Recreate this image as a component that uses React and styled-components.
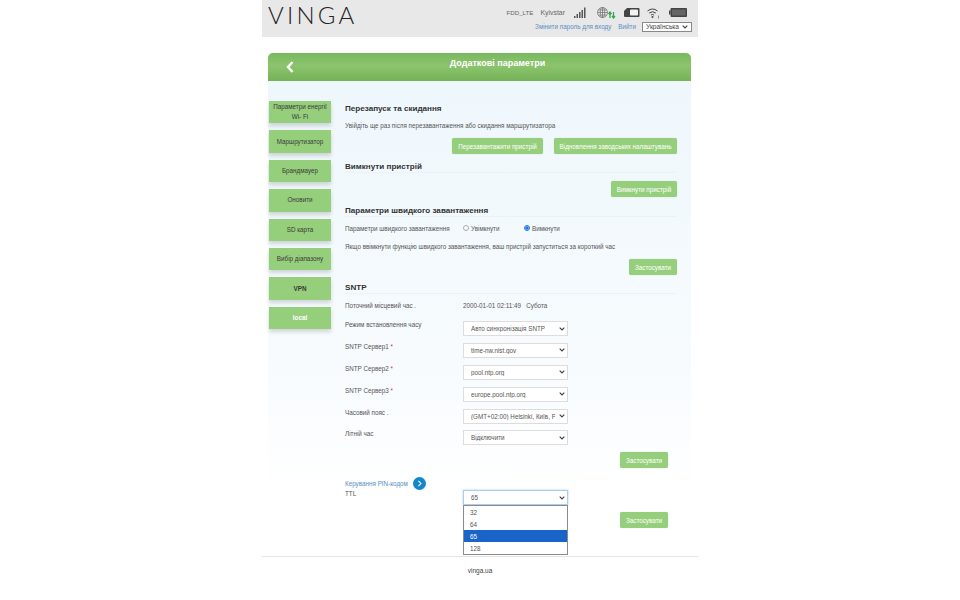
import { Fragment } from 'react';
import styled, { createGlobalStyle } from 'styled-components';

const GlobalStyle = createGlobalStyle`
  html, body {
    margin: 0;
    padding: 0;
    background: #fff;
  }
  body {
    font-family: "Liberation Sans", Arial, sans-serif;
    color: #333;
  }
`;

const chevron = `url("data:image/svg+xml,%3Csvg xmlns='http://www.w3.org/2000/svg' width='6' height='4'%3E%3Cpath d='M.7.7 3 3 5.3.7' fill='none' stroke='%23444' stroke-width='1.2'/%3E%3C/svg%3E")`;

const Page = styled.div`
  width: 436px;
  height: 600px;
  margin-left: 262px;
  overflow: hidden;
`;

const TopBar = styled.header`
  height: 37px;
  background: #e8e8e8;
  display: flex;
  justify-content: space-between;
`;

const Logo = styled.div`
  font-family: Lato, "Liberation Sans", sans-serif;
  font-size: 24px;
  font-weight: 300;
  letter-spacing: 3.2px;
  line-height: 30px;
  height: 30px;
  color: #222;
  padding-left: 6px;
`;

const TopRight = styled.div`
  display: flex;
  flex-direction: column;
  align-items: flex-end;
  padding-right: 6px;
`;

const StatusRow = styled.div`
  display: flex;
  align-items: center;
  height: 17px;
  margin: 4px 5px 0 0;
  color: #666;
`;

const StatusText = styled.span`
  font-size: ${(p) => p.$size}px;
  margin-right: ${(p) => p.$gap}px;
`;

const StatusIcon = styled.svg`
  display: block;
  margin-right: ${(p) => p.$gap || 0}px;
`;

const LinkRow = styled.div`
  display: flex;
  align-items: center;
  height: 11px;
  font-size: 6.3px;
  color: #5a8fc0;
`;

const TopLink = styled.a`
  margin-right: ${(p) => p.$gap}px;
`;

const LangSelect = styled.select`
  appearance: none;
  width: 50px;
  height: 10px;
  padding: 0 0 0 3px;
  font: 6.6px "Liberation Sans", sans-serif;
  color: #444;
  background: #fff ${chevron} no-repeat right 3px center;
  border: 1px solid #888;
  border-radius: 0;
`;

const Card = styled.main`
  width: 423px;
  margin: 16px 0 0 6px;
`;

const TitleBar = styled.div`
  height: 28px;
  position: relative;
  display: flex;
  justify-content: center;
  padding: 4px 0 0 36px;
  box-sizing: border-box;
  border-radius: 5px 5px 0 0;
  background: linear-gradient(#78b95e, #8cc46e 45%, #74b257);
  color: #fff;
  font-size: 9px;
  font-weight: bold;
  line-height: 12px;
`;

const BackIcon = styled.svg`
  position: absolute;
  left: 18px;
  top: 8px;
`;

const CardBody = styled.div`
  display: flex;
  padding: 20px 14px 0 1px;
  height: 445px;
  background: linear-gradient(#eef7fc, #f7fbfe 60%, #fff 90%);
`;

const Side = styled.nav`
  width: 62px;
  flex: none;
  display: grid;
  grid-auto-rows: 22.4px;
  row-gap: 7px;
  align-content: start;
`;

const SideItem = styled.div`
  display: flex;
  align-items: center;
  justify-content: center;
  text-align: center;
  background: #96cf7c;
  box-shadow: 0 3px 4px rgba(0, 0, 0, 0.15);
  font-size: 6.3px;
  line-height: 10px;
  color: ${(p) => (p.$active ? '#fff' : '#3a3a3a')};
  font-weight: ${(p) => (p.$bold ? 'bold' : 'normal')};
`;

const Content = styled.section`
  flex: 1;
  margin-left: 14px;
  padding-top: 1px;
  display: flex;
  flex-direction: column;
`;

const Heading = styled.h3`
  margin: ${(p) => p.$top || 0}px 0 0;
  height: 12px;
  font-size: 8.1px;
  font-weight: bold;
  line-height: 14px;
  color: #333;
  border-bottom: ${(p) => (p.$line ? '1px solid #eef2f4' : 'none')};
  box-sizing: content-box;
`;

const Text = styled.p`
  margin: ${(p) => p.$top}px 0 0;
  height: 12px;
  font-size: 6.3px;
  line-height: 12px;
  color: #555;
`;

const Actions = styled.div`
  display: flex;
  justify-content: flex-end;
  gap: 11px;
  margin-top: ${(p) => p.$top}px;
  margin-right: ${(p) => p.$inset || 0}px;
`;

const Button = styled.div`
  height: 16px;
  width: ${(p) => p.$w}px;
  display: flex;
  align-items: center;
  justify-content: center;
  background: #96cf7c;
  border-radius: 2px;
  color: #fff;
  font-size: 6.3px;
  box-shadow: 0 0 1px rgba(0, 80, 0, 0.3);
`;

const RadioRow = styled.div`
  display: flex;
  align-items: center;
  height: 12px;
  margin-top: 5px;
  font-size: 6.3px;
  color: #555;
`;

const RadioLabel = styled.span`
  width: 118px;
`;

const RadioOption = styled.label`
  display: flex;
  align-items: center;
  width: ${(p) => p.$w}px;
`;

const Radio = styled.input`
  width: 6px;
  height: 6px;
  margin: 0 2px 0 0;
  accent-color: #1a73e8;

  &:not(:checked) {
    opacity: 0.6;
  }
`;

const InfoRow = styled.div`
  display: grid;
  grid-template-columns: 118px auto;
  height: 12px;
  margin-top: 6px;
  font-size: 6.3px;
  line-height: 12px;
  color: #555;
`;

const Fields = styled.div`
  display: grid;
  grid-template-columns: 118px 105px;
  grid-auto-rows: 15px;
  row-gap: 6.9px;
  margin-top: ${(p) => p.$top}px;
`;

const FieldLabel = styled.div`
  font-size: 6.3px;
  line-height: 7px;
  color: #555;
`;

const Required = styled.span`
  color: #d33;
`;

const FieldSelect = styled.select`
  appearance: none;
  display: block;
  width: 105px;
  height: 15px;
  box-sizing: border-box;
  padding: 0 12px 0 7px;
  font: 6.3px "Liberation Sans", sans-serif;
  color: #555;
  background: #fff ${chevron} no-repeat right 2px center;
  border: 1px solid ${(p) => (p.$open ? '#a9cdec' : '#ddd')};
  box-shadow: ${(p) => (p.$open ? '0 0 2px #a9cdec' : 'none')};
  border-radius: 0;
  outline: none;
`;

const PinRow = styled.div`
  display: flex;
  align-items: center;
  gap: 5px;
  height: 12px;
  margin-top: 9px;
  font-size: 6.3px;
  color: #5a8fc0;
`;

const PinCircle = styled.svg`
  display: block;
  flex: none;
`;

const DropAnchor = styled.div`
  position: relative;
  height: 15px;
`;

const DropList = styled.ul`
  position: absolute;
  top: 15px;
  left: 0;
  width: 105px;
  box-sizing: border-box;
  margin: 0;
  padding: 0;
  list-style: none;
  background: #fff;
  border: 1px solid #8c8c8c;
  z-index: 2;
`;

const DropItem = styled.li`
  height: 12px;
  padding-left: 6px;
  font-size: 6.3px;
  line-height: 14px;
  background: ${(p) => (p.$selected ? '#1a63c9' : '#fff')};
  color: ${(p) => (p.$selected ? '#fff' : '#555')};
`;

const Footer = styled.footer`
  margin-top: 10px;
  border-top: 1px solid #e6e6e6;
  height: 27px;
  display: flex;
  align-items: center;
  justify-content: center;
  font-size: 6.5px;
  color: #444;
`;

const menu = ['Маршрутизатор', 'Брандмауер', 'Оновити', 'SD карта', 'Вибір діапазону'];

const fields = [
  { label: 'Режим встановлення часу', value: 'Авто синхронізація SNTP' },
  { label: 'SNTP Сервер1', value: 'time-nw.nist.gov', required: true },
  { label: 'SNTP Сервер2', value: 'pool.ntp.org', required: true },
  { label: 'SNTP Сервер3', value: 'europe.pool.ntp.org', required: true },
  { label: 'Часовий пояс .', value: '(GMT+02:00) Helsinki, Київ, Рига' },
  { label: 'Літній час', value: 'Відключити' },
];

function SignalIcon() {
  return (
    <StatusIcon $gap={11} width="12" height="12" viewBox="0 0 12 12" fill="#555">
      <rect x="0" y="9" width="1.5" height="2" />
      <rect x="2.5" y="7" width="1.5" height="4" />
      <rect x="5" y="5" width="1.5" height="6" />
      <rect x="7.5" y="3" width="1.5" height="8" />
      <rect x="10" y="0.5" width="1.5" height="10.5" />
    </StatusIcon>
  );
}

function GlobeIcon() {
  return (
    <StatusIcon $gap={8} width="19" height="12" viewBox="0 0 19 12" fill="none">
      <g stroke="#777" strokeWidth="0.8">
        <circle cx="5.5" cy="5.5" r="5" />
        <ellipse cx="5.5" cy="5.5" rx="2.2" ry="5" />
        <path d="M.5 5.5h10M1.2 3h8.6M1.2 8h8.6M5.5.5v10" />
      </g>
      <path d="M13 11V5.5M11.5 7l1.5-2 1.5 2M16.5 5v5.5M15 9l1.5 2 1.5-2" stroke="#2fa84f" strokeWidth="1.3" />
    </StatusIcon>
  );
}

function SimIcon() {
  return (
    <StatusIcon $gap={7} width="16" height="9" viewBox="0 0 16 9">
      <path d="M3 0h11.5a1 1 0 0 1 1 1v7a1 1 0 0 1-1 1H1a1 1 0 0 1-1-1V3z" fill="#444" />
      <rect x="6" y="1.5" width="8" height="6" rx="0.8" fill="#f2f2f2" />
    </StatusIcon>
  );
}

function WifiIcon() {
  return (
    <StatusIcon $gap={9} width="13" height="12" viewBox="0 0 13 12" fill="none">
      <path d="M.5 4a8 8 0 0 1 10 0M2.2 6a5.4 5.4 0 0 1 6.6 0M3.9 8a2.8 2.8 0 0 1 3.2 0" stroke="#444" strokeWidth="1" />
      <circle cx="5.5" cy="10" r="1" fill="#444" />
      <path d="M11.5 8.5v3" stroke="#666" strokeWidth="0.7" />
    </StatusIcon>
  );
}

function BatteryIcon() {
  return (
    <StatusIcon width="18" height="9" viewBox="0 0 18 9">
      <rect x="0" y="2.5" width="1.5" height="4" fill="#444" />
      <rect x="1.5" y="0" width="16.5" height="9" rx="1" fill="#444" />
      <rect x="3" y="1.5" width="13.5" height="6" fill="#666" />
    </StatusIcon>
  );
}

export default function App() {
  return (
    <Page>
      <GlobalStyle />
      <TopBar>
        <Logo>VINGA</Logo>
        <TopRight>
          <StatusRow>
            <StatusText $size={6.2} $gap={7}>FDD_LTE</StatusText>
            <StatusText $size={6.9} $gap={9}>Kyivstar</StatusText>
            <SignalIcon />
            <GlobeIcon />
            <SimIcon />
            <WifiIcon />
            <BatteryIcon />
          </StatusRow>
          <LinkRow>
            <TopLink $gap={7}>Змінити пароль для входу</TopLink>
            <TopLink $gap={6}>Вийти</TopLink>
            <LangSelect defaultValue="uk">
              <option value="uk">Українська</option>
            </LangSelect>
          </LinkRow>
        </TopRight>
      </TopBar>

      <Card>
        <TitleBar>
          <BackIcon width="8" height="12" viewBox="0 0 8 12" fill="none">
            <path d="M6.5 1 2 6l4.5 5" stroke="#fff" strokeWidth="2.4" />
          </BackIcon>
          Додаткові параметри
        </TitleBar>
        <CardBody>
          <Side>
            <SideItem>Параметри енергії<br />Wi- Fi</SideItem>
            {menu.map((m) => (
              <SideItem key={m}>{m}</SideItem>
            ))}
            <SideItem $bold>VPN</SideItem>
            <SideItem $active $bold>local</SideItem>
          </Side>
          <Content>
            <Heading>Перезапуск та скидання</Heading>
            <Text $top={6}>Увійдіть ще раз після перезавантаження або скидання маршрутизатора</Text>
            <Actions $top={6}>
              <Button $w={91}>Перезавантажити пристрій</Button>
              <Button $w={123}>Відновлення заводських налаштувань</Button>
            </Actions>

            <Heading $top={6} $line>Вимкнути пристрій</Heading>
            <Actions $top={8}>
              <Button $w={66}>Вимкнути пристрій</Button>
            </Actions>

            <Heading $top={7} $line>Параметри швидкого завантаження</Heading>
            <RadioRow>
              <RadioLabel>Параметри швидкого завантаження</RadioLabel>
              <RadioOption $w={61}><Radio type="radio" name="fast" />Увімкнути</RadioOption>
              <RadioOption $w={50}><Radio type="radio" name="fast" defaultChecked />Вимкнути</RadioOption>
            </RadioRow>
            <Text $top={7}>Якщо ввімкнути функцію швидкого завантаження, ваш пристрій запуститься за короткий час</Text>
            <Actions $top={6}>
              <Button $w={48}>Застосувати</Button>
            </Actions>

            <Heading $top={6} $line>SNTP</Heading>
            <InfoRow>
              <span>Поточний місцевий час .</span>
              <span>2000-01-01 02:11:49 &nbsp; Субота</span>
            </InfoRow>
            <Fields $top={9}>
              {fields.map((f) => (
                <Fragment key={f.label}>
                  <FieldLabel>
                    {f.label}{f.required && <> <Required>*</Required></>}
                  </FieldLabel>
                  <FieldSelect defaultValue={f.value}>
                    <option>{f.value}</option>
                  </FieldSelect>
                </Fragment>
              ))}
            </Fields>
            <Actions $top={7} $inset={9}>
              <Button $w={48}>Застосувати</Button>
            </Actions>

            <PinRow>
              Керування PIN-кодом
              <PinCircle width="13" height="13" viewBox="0 0 14 14" fill="none">
                <circle cx="7" cy="7" r="7" fill="#1487c9" />
                <path d="M5.8 4.2 8.6 7l-2.8 2.8" stroke="#fff" strokeWidth="1.1" />
              </PinCircle>
            </PinRow>
            <Fields $top={1}>
              <FieldLabel>TTL</FieldLabel>
              <DropAnchor>
                <FieldSelect $open defaultValue="65">
                  <option>65</option>
                </FieldSelect>
                <DropList>
                  <DropItem>32</DropItem>
                  <DropItem>64</DropItem>
                  <DropItem $selected>65</DropItem>
                  <DropItem>128</DropItem>
                </DropList>
              </DropAnchor>
            </Fields>
            <Actions $top={7} $inset={9}>
              <Button $w={48}>Застосувати</Button>
            </Actions>
          </Content>
        </CardBody>
      </Card>
      <Footer>vinga.ua</Footer>
    </Page>
  );
}
